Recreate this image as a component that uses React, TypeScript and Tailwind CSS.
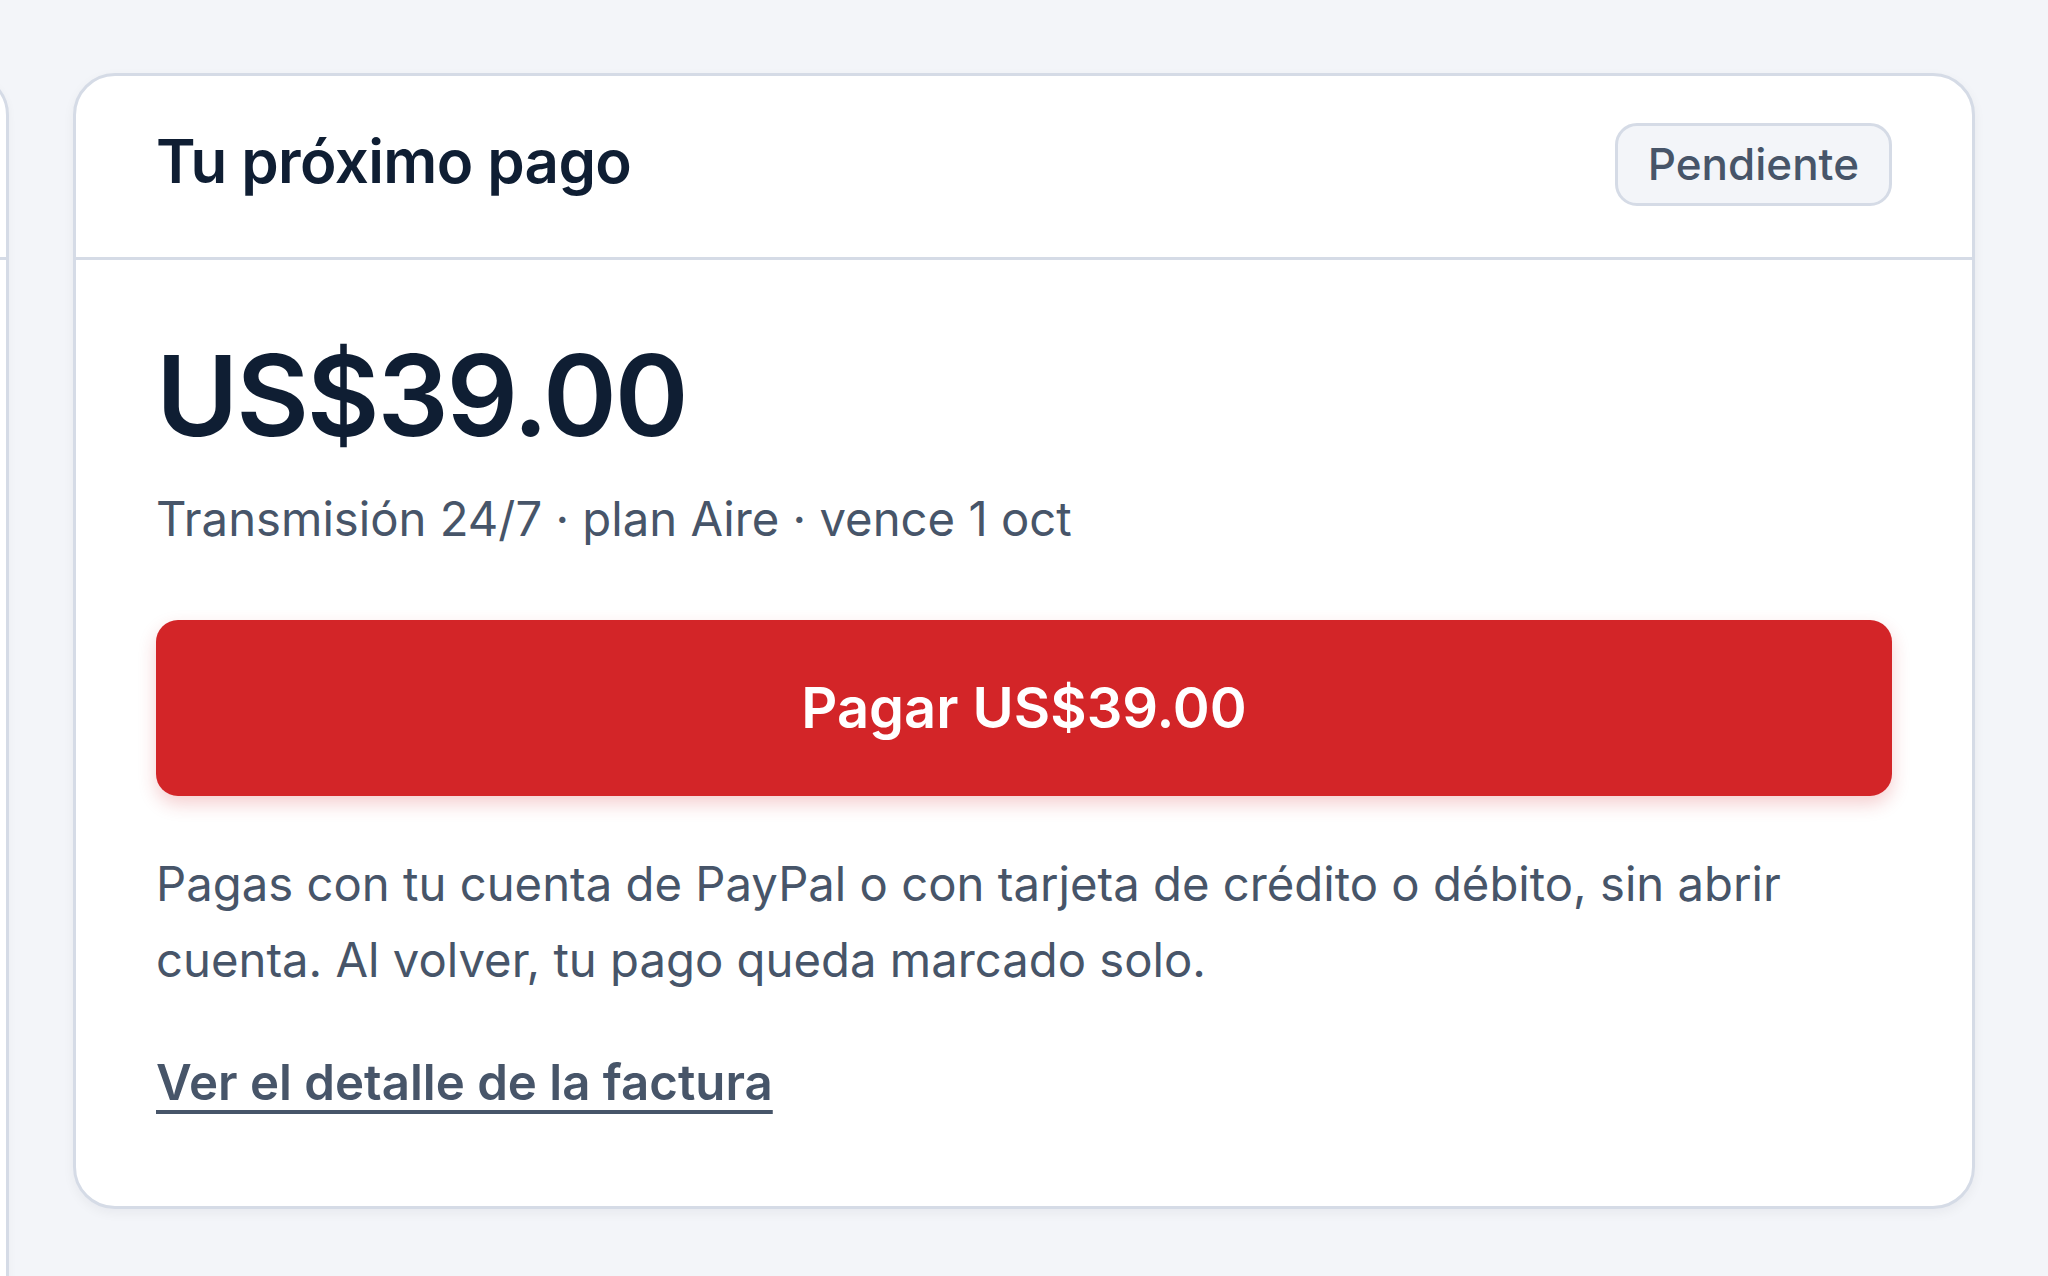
import React from "react";

export default function App() {
  return (
    <div
      className="w-full h-[1276px] overflow-hidden bg-[#f3f5f9] flex items-start gap-[64px] pt-[73px]"
      style={{ fontFamily: "Inter, 'Noto Sans', sans-serif" }}
    >
      {/* partially visible card on the left */}
      <div className="shrink-0 w-[600px] ml-[-591px] h-[1400px] bg-white border-[3px] border-[#d5dbe6] rounded-[42px] shadow-[0_2px_8px_rgba(15,23,42,0.04)]">
        <div className="h-[184px] border-b-[3px] border-[#d5dbe6]" />
      </div>

      {/* main card */}
      <div className="shrink-0 w-[1902px] bg-white border-[3px] border-[#d5dbe6] rounded-[42px] shadow-[0_4px_12px_rgba(15,23,42,0.05)]">
        <div className="h-[184px] border-b-[3px] border-[#d5dbe6] flex items-center justify-between px-[80px] pb-[5px]">
          <h2 className="mb-[7px] text-[60px] leading-none font-semibold text-[#0f1e33] tracking-[-0.01em]">
            Tu próximo pago
          </h2>
          <span className="h-[83px] flex items-center px-[30px] bg-[#f3f5f9] border-[3px] border-[#d5dbe6] rounded-[22px] text-[44px] leading-none font-medium text-[#475569]">
            Pendiente
          </span>
        </div>

        <div className="px-[80px] pt-[79px] pb-[86px] flex flex-col">
          <div className="text-[112px] leading-none font-semibold text-[#0f1e33] tracking-[-0.02em]">
            US$39.00
          </div>
          <div className="mt-[33px] text-[47.25px] leading-[1.5] text-[#475569]">
            Transmisión 24/7 · plan Aire · vence 1 oct
          </div>
          <button className="mt-[65px] h-[176px] w-full rounded-[22px] bg-[#d32528] text-white text-[56px] font-semibold leading-none shadow-[0_8px_18px_rgba(211,37,40,0.22)]">
            Pagar US$39.00
          </button>
          <p className="mt-[50px] text-[47.25px] leading-[76px] text-[#475569]">
            Pagas con tu cuenta de PayPal o con tarjeta de crédito o débito, sin abrir cuenta. Al volver, tu pago queda marcado solo.
          </p>
          <div className="mt-[48px]">
            <a
              href="#"
              className="text-[49.2px] leading-[1.5] font-semibold text-[#475569] underline decoration-[4px] underline-offset-[10px]"
            >
              Ver el detalle de la factura
            </a>
          </div>
        </div>
      </div>
    </div>
  );
}
